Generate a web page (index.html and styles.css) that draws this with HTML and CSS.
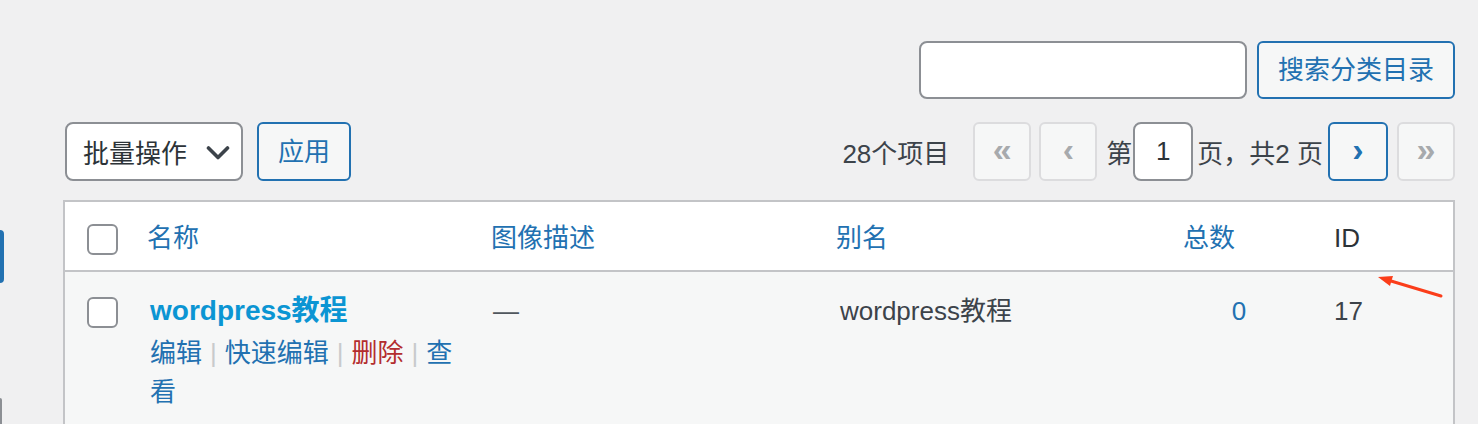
FILE: index.html
```html
<!DOCTYPE html>
<html lang="zh-CN">
<head>
<meta charset="utf-8">
<title>分类目录</title>
<link rel="stylesheet" href="styles.css">
</head>
<body>
<div class="page">
  <div class="edge">
    <div class="edge-tab"></div>
    <div class="edge-stub"></div>
  </div>
  <main class="content">
    <div class="search-box">
      <input class="search-input" type="search" aria-label="搜索">
      <button class="btn">搜索分类目录</button>
    </div>
    <div class="tablenav">
      <div class="bulk">
        <div class="select">
          <span>批量操作</span>
          <svg class="chevron" width="24" height="14" viewBox="0 0 24 14"><path d="M2.5 2 L12 11.5 L21.5 2" fill="none" stroke="#3c434a" stroke-width="3.6" stroke-linecap="round" stroke-linejoin="round"/></svg>
        </div>
        <button class="btn btn-apply">应用</button>
      </div>
      <div class="pages">
        <span class="num">28个项目</span>
        <span class="pbtn disabled">«</span>
        <span class="pbtn disabled second">‹</span>
        <span class="plabel">第</span>
        <span class="page-input">1</span>
        <span class="ptext">页，共2 页</span>
        <span class="pbtn active">›</span>
        <span class="pbtn disabled last">»</span>
      </div>
    </div>
    <div class="table">
      <div class="row head">
        <div class="cell cb"><span class="checkbox"></span></div>
        <div class="cell name"><span class="sort">名称</span></div>
        <div class="cell desc"><span class="sort">图像描述</span></div>
        <div class="cell slug"><span class="sort">别名</span></div>
        <div class="cell count"><span class="sort">总数</span></div>
        <div class="cell id">ID</div>
      </div>
      <div class="row item">
        <div class="cell cb"><span class="checkbox"></span></div>
        <div class="cell name">
          <div class="row-title">wordpress教程</div>
          <div class="row-actions"><span class="act">编辑</span><span class="sep">|</span><span class="act">快速编辑</span><span class="sep">|</span><span class="act del">删除</span><span class="sep">|</span><span class="act">查</span><span class="act">看</span></div>
        </div>
        <div class="cell desc"><span class="dash">—</span></div>
        <div class="cell slug">wordpress教程</div>
        <div class="cell count"><span class="cnt">0</span></div>
        <div class="cell id">17</div>
      </div>
    </div>
  </main>
  <svg class="arrow" width="80" height="36" viewBox="0 0 80 36">
    <path d="M21 13 L71 28" stroke="#fb3d1a" stroke-width="3" stroke-linecap="round" fill="none"/>
    <polygon points="8,9 23,8 21.4,13 20,18" fill="#fb3d1a"/>
  </svg>
</div>
</body>
</html>
```

FILE: styles.css
```css
html, body {
  margin: 0;
  padding: 0;
  overflow: hidden;
}

body {
  background: #f0f0f1;
  font-family: "Liberation Sans", "Noto Sans CJK SC", sans-serif;
  font-size: 26px;
  color: #3c434a;
}

.page {
  position: relative;
  display: flex;
  height: 424px;
}

.edge {
  width: 4px;
  display: flex;
  flex-direction: column;
}

.edge-tab {
  margin-top: 230px;
  width: 4px;
  height: 60px;
  background: #2271b1;
  border-radius: 0 4px 4px 0;
}

.edge-stub {
  margin-top: 115px;
  width: 2px;
  height: 30px;
  background: #8c8f94;
  border-radius: 0 2px 0 0;
}

.content {
  margin-left: 59px;
  width: 1392px;
  padding-top: 41px;
}

/* search */
.search-box {
  display: flex;
  justify-content: flex-end;
  gap: 10px;
}

.search-input {
  width: 328px;
  height: 58px;
  box-sizing: border-box;
  border: 2px solid #8c8f94;
  border-radius: 8px;
  background: #fff;
  margin: 0;
}

.btn {
  height: 58px;
  box-sizing: border-box;
  border: 2px solid #2271b1;
  border-radius: 6px;
  background: #f6f7f7;
  color: #2271b1;
  font-family: "Liberation Sans", "Noto Sans CJK SC", sans-serif;
  font-size: 26px;
  padding: 0 19px;
  margin: 0;
  line-height: 1;
}

/* tablenav */
.tablenav {
  display: flex;
  justify-content: space-between;
  align-items: center;
  margin-top: 23px;
  height: 59px;
}

.bulk {
  display: flex;
  gap: 14px;
  margin-left: 2px;
}

.select {
  width: 178px;
  height: 59px;
  box-sizing: border-box;
  border: 2px solid #8c8f94;
  border-radius: 8px;
  background: #fff;
  padding-left: 16px;
  display: flex;
  align-items: center;
  color: #2c3338;
}

.chevron {
  margin-left: 19px;
  margin-top: 2px;
}

.btn-apply {
  height: 59px;
}

.pages {
  display: flex;
  align-items: center;
  color: #3c434a;
}

.num {
  margin-right: 24px;
}

.pbtn {
  width: 58px;
  height: 59px;
  box-sizing: border-box;
  border: 2px solid #dcdcde;
  border-radius: 6px;
  background: #f6f7f7;
  color: #a7aaad;
  font-size: 34px;
  font-weight: bold;
  display: flex;
  align-items: center;
  justify-content: center;
  padding-bottom: 4px;
}

.pbtn.second {
  margin-left: 8px;
}

.pbtn.active {
  width: 60px;
  border-color: #2271b1;
  color: #2271b1;
  margin-left: 5px;
}

.pbtn.last {
  margin-left: 9px;
}

.plabel {
  margin-left: 9px;
}

.page-input {
  margin-left: 1px;
  width: 60px;
  height: 59px;
  box-sizing: border-box;
  border: 2px solid #8c8f94;
  border-radius: 8px;
  background: #fff;
  color: #2c3338;
  display: flex;
  align-items: center;
  justify-content: center;
}

.ptext {
  margin-left: 4px;
}

/* table */
.table {
  margin-top: 19px;
  border: 2px solid #c3c4c7;
  background: #fff;
}

.row {
  display: grid;
  grid-template-columns: 82px 344px 345px 332px 142px 143px;
}

.head {
  border-bottom: 2px solid #c3c4c7;
  background: #fff;
}

.head .cell {
  padding: 17px 0 13px;
  line-height: 38px;
}

.sort {
  color: #2271b1;
}

.head .cell.cb {
  padding: 22px 0 0 22px;
}

.checkbox {
  display: block;
  width: 31px;
  height: 31px;
  box-sizing: border-box;
  border: 2px solid #8c8f94;
  border-radius: 6px;
  background: #fff;
}

.item {
  background: #f6f7f7;
}

.item .cell {
  padding: 20px 0 22px;
  line-height: 38px;
}

.item .cell.cb {
  padding: 25px 0 0 22px;
}

.item .cell.name {
  padding-left: 3px;
  padding-right: 20px;
}

.row-title {
  font-size: 28px;
  font-weight: bold;
  color: #0b95d3;
  line-height: 38px;
}

.row-actions {
  padding-top: 4px;
  line-height: 39px;
  font-size: 26px;
  color: #2271b1;
}

.sep {
  color: #c8cacc;
  margin: 0 8px;
}

.del {
  color: #b32d2e;
}

.dash {
  color: #50575e;
  margin-left: 2px;
}

.item .cell.slug {
  padding-left: 4px;
}

.head .cell.count {
  padding-left: 15px;
}

.item .cell.count {
  text-align: center;
}

.cnt {
  color: #2271b1;
}

.cell.id {
  padding-left: 24px;
  color: #2c3338;
}

.item .cell.id {
  color: #3c434a;
}

.arrow {
  position: absolute;
  left: 1370px;
  top: 268px;
}
```
